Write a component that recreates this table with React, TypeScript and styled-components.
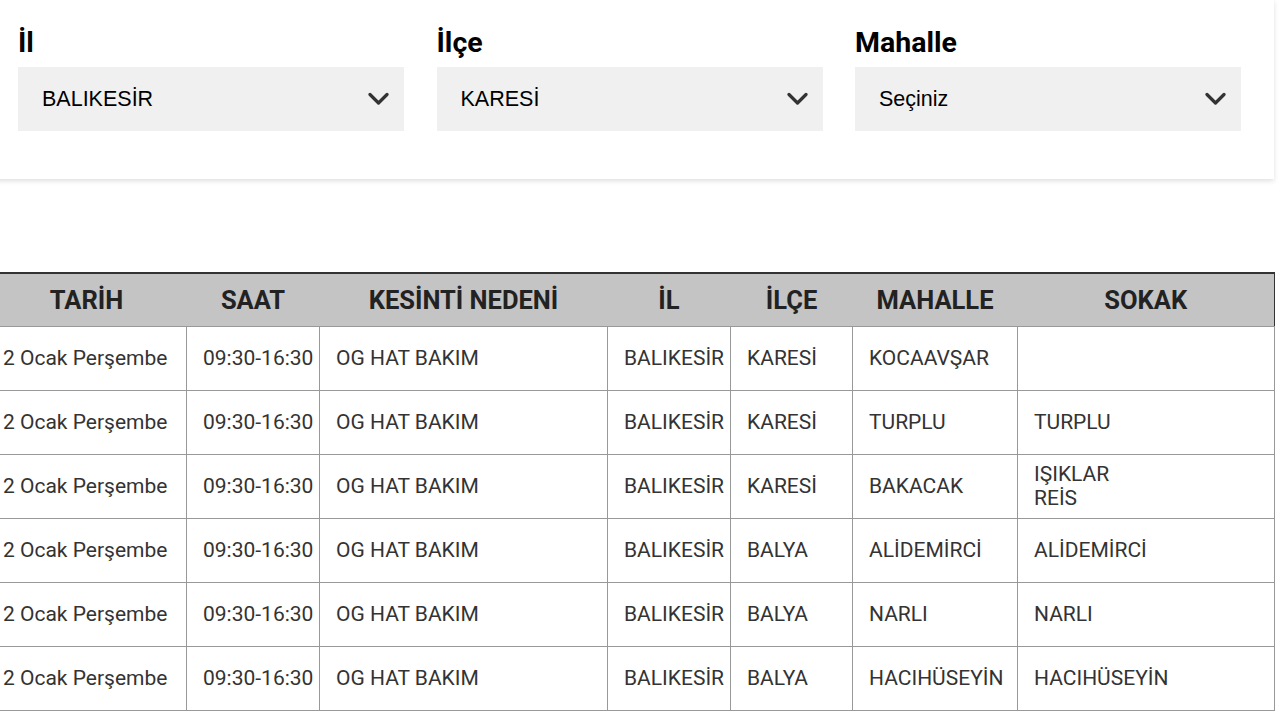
import React from "react";
import styled, { createGlobalStyle } from "styled-components";

const GlobalStyle = createGlobalStyle`
  html, body { margin: 0; padding: 0; background: #ffffff; }
  body { font-family: Roboto, "Liberation Sans", Arial, sans-serif; overflow: hidden; }
  * { box-sizing: border-box; }
`;

const Page = styled.div`
  width: 1288px;
  margin-left: -14px;
`;

const FilterCard = styled.section`
  background: #fff;
  padding: 26px 33px 48px 32px;
  box-shadow: 0 2px 5px rgba(0, 0, 0, 0.13);
  display: grid;
  grid-template-columns: repeat(3, 1fr);
  column-gap: 32.5px;
`;

const Field = styled.div`
  display: flex;
  flex-direction: column;
`;

const Label = styled.label`
  font-family: Roboto, sans-serif;
  font-weight: 700;
  font-size: 28.5px;
  line-height: 33px;
  color: #000;
  margin-bottom: 8px;
`;

const SelectBox = styled.div`
  height: 64px;
  background: #f0f0f0;
  display: flex;
  align-items: center;
  justify-content: space-between;
  padding: 0 15px 0 24px;
  font-family: "Liberation Sans", Arial, sans-serif;
  font-size: 21.5px;
  color: #000;
`;

const Chevron = () => (
  <svg width="21" height="14" viewBox="0 0 21 14" aria-hidden="true">
    <polyline
      points="2,2.5 10.5,11 19,2.5"
      fill="none"
      stroke="#333"
      strokeWidth="3.2"
      strokeLinecap="round"
      strokeLinejoin="round"
    />
  </svg>
);

const Table = styled.table`
  margin-top: 93px;
  width: 1288px;
  border-collapse: collapse;
  table-layout: fixed;
  font-family: Roboto, sans-serif;
`;

const HeadRow = styled.tr`
  background: #c4c4c4;
`;

const Th = styled.th`
  height: 53px;
  border-top: 2px solid #333;
  border-bottom: 1px solid #999;
  font-weight: 700;
  font-size: 25.5px;
  color: #222;
  text-align: center;
  padding: 0;
  &:last-child {
    border-right: 1px solid #333;
  }
`;

const Td = styled.td`
  height: 64px;
  border: 1px solid #999;
  padding: 0 16px;
  font-size: 21px;
  line-height: 24px;
  color: #333;
  vertical-align: middle;
  white-space: nowrap;
`;

const columns = [200, 133, 288, 123, 122, 165, 257];
const headers = ["TARİH", "SAAT", "KESİNTİ NEDENİ", "İL", "İLÇE", "MAHALLE", "SOKAK"];

type Row = { ilce: string; mahalle: string; sokak: string[] };

const rows: Row[] = [
  { ilce: "KARESİ", mahalle: "KOCAAVŞAR", sokak: [] },
  { ilce: "KARESİ", mahalle: "TURPLU", sokak: ["TURPLU"] },
  { ilce: "KARESİ", mahalle: "BAKACAK", sokak: ["IŞIKLAR", "REİS"] },
  { ilce: "BALYA", mahalle: "ALİDEMİRCİ", sokak: ["ALİDEMİRCİ"] },
  { ilce: "BALYA", mahalle: "NARLI", sokak: ["NARLI"] },
  { ilce: "BALYA", mahalle: "HACIHÜSEYİN", sokak: ["HACIHÜSEYİN"] },
];

const filters = [
  { label: "İl", value: "BALIKESİR" },
  { label: "İlçe", value: "KARESİ" },
  { label: "Mahalle", value: "Seçiniz" },
];

export default function App() {
  return (
    <Page>
      <GlobalStyle />
      <FilterCard>
        {filters.map((f) => (
          <Field key={f.label}>
            <Label>{f.label}</Label>
            <SelectBox>
              <span>{f.value}</span>
              <Chevron />
            </SelectBox>
          </Field>
        ))}
      </FilterCard>
      <Table>
        <colgroup>
          {columns.map((w, i) => (
            <col key={i} style={{ width: w }} />
          ))}
        </colgroup>
        <thead>
          <HeadRow>
            {headers.map((h) => (
              <Th key={h}>{h}</Th>
            ))}
          </HeadRow>
        </thead>
        <tbody>
          {rows.map((r, i) => (
            <tr key={i}>
              <Td>2 Ocak Perşembe</Td>
              <Td>09:30-16:30</Td>
              <Td>OG HAT BAKIM</Td>
              <Td>BALIKESİR</Td>
              <Td>{r.ilce}</Td>
              <Td>{r.mahalle}</Td>
              <Td>
                {r.sokak.map((s, j) => (
                  <div key={j}>{s}</div>
                ))}
              </Td>
            </tr>
          ))}
        </tbody>
      </Table>
    </Page>
  );
}
